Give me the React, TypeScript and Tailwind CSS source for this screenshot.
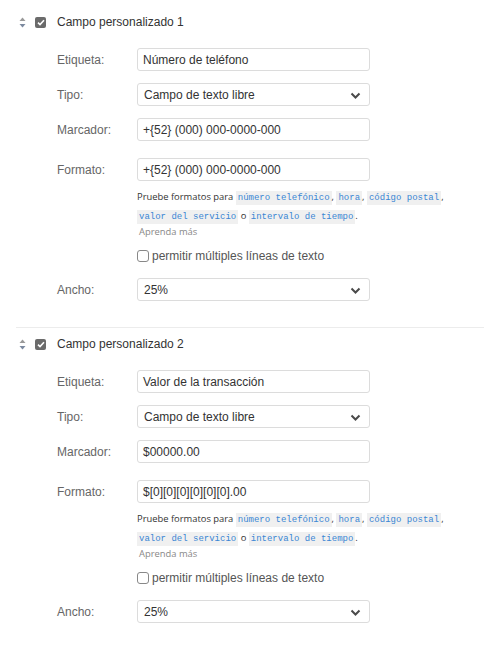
import React from "react";

const Chevron = () => (
  <svg width="11" height="8" viewBox="0 0 11 8" className="absolute right-[8px] top-[8px]">
    <path d="M1.5 1.5 L5.5 5.5 L9.5 1.5" fill="none" stroke="#4a4a4a" strokeWidth="2" />
  </svg>
);

const SortIcon = () => (
  <svg width="7" height="11" viewBox="0 0 7 11">
    <path d="M3.5 0.5 L6.5 4 L0.5 4 Z" fill="#9a9a9a" />
    <path d="M3.5 10.5 L6.5 7 L0.5 7 Z" fill="#7c8aa0" />
  </svg>
);

const HeaderCheck = () => (
  <div className="w-[11px] h-[11px] rounded-[2px] bg-[#6b6b6b] flex items-center justify-center">
    <svg width="8" height="7" viewBox="0 0 8 7">
      <path d="M1 3.6 L3 5.5 L7 1.2" fill="none" stroke="#ffffff" strokeWidth="1.6" />
    </svg>
  </div>
);

const Code = ({ children }: { children: React.ReactNode }) => (
  <span className="bg-[#f0f0f0] text-[#3a86d4] px-[2px] py-[2px] text-[9px]" style={{ fontFamily: '"Liberation Mono", "DejaVu Sans Mono", monospace' }}>
    {children}
  </span>
);

const Row = ({ label, children, mt }: { label: string; children: React.ReactNode; mt: string }) => (
  <div className={`flex items-center ${mt}`}>
    <div className="w-[80px] pl-[57px] box-content shrink-0 text-[12px] text-[#666]">{label}</div>
    <div className="w-[233px]">{children}</div>
  </div>
);

const Input = ({ value }: { value: string }) => (
  <div className="h-[23px] border border-[#dcdcdc] rounded-[3px] px-[5px] flex items-center text-[12px] text-[#333] bg-white">
    {value}
  </div>
);

const Select = ({ value }: { value: string }) => (
  <div className="relative h-[23px] border border-[#dcdcdc] rounded-[3px] pl-[6px] flex items-center text-[12px] text-[#333] bg-white">
    {value}
    <Chevron />
  </div>
);

const helpFont = { fontFamily: '"Open Sans", "Noto Sans", sans-serif' };

const Section = ({ n, label, marker, format }: { n: number; label: string; marker: string; format: string }) => (
  <div>
    <div className="flex items-center h-[14px] pl-[19px]">
      <SortIcon />
      <div className="ml-[9px]"><HeaderCheck /></div>
      <div className="ml-[11px] text-[12px] text-[#333]">Campo personalizado {n}</div>
    </div>
    <Row label="Etiqueta:" mt="mt-[19px]"><Input value={label} /></Row>
    <Row label="Tipo:" mt="mt-[12px]"><Select value="Campo de texto libre" /></Row>
    <Row label="Marcador:" mt="mt-[12px]"><Input value={marker} /></Row>
    <Row label="Formato:" mt="mt-[17px]"><Input value={format} /></Row>
    <div className="ml-[137px] mt-[7px] w-[350px]">
      <div className="h-[19px] flex items-center text-[9.4px] text-[#333] whitespace-nowrap" style={helpFont}>
        <span>Pruebe formatos para <Code>número telefónico</Code>, <Code>hora</Code>, <Code>código postal</Code>,</span>
      </div>
      <div className="h-[19px] flex items-center text-[9.4px] text-[#333] whitespace-nowrap" style={helpFont}>
        <span><Code>valor del servicio</Code> o <Code>intervalo de tiempo</Code>.</span>
      </div>
      <div className="h-[13px] flex items-center text-[9.4px] text-[#888] ml-[2px]" style={helpFont}>
        Aprenda más
      </div>
      <div className="flex items-center h-[16px] mt-[9px]">
        <div className="w-[12px] h-[12px] border border-[#888] rounded-[3px] bg-white" />
        <div className="ml-[3px] text-[12px] text-[#555]">permitir múltiples líneas de texto</div>
      </div>
    </div>
    <Row label="Ancho:" mt="mt-[14px]"><Select value="25%" /></Row>
  </div>
);

export default function App() {
  return (
    <div className="w-[500px] h-[648px] bg-white overflow-hidden pt-[15px]" style={{ fontFamily: '"Liberation Sans", Arial, sans-serif' }}>
      <Section n={1} label="Número de teléfono" marker="+{52} (000) 000-0000-000" format="+{52} (000) 000-0000-000" />
      <div className="mt-[26px] mx-[16px] border-t border-[#ececec]" />
      <div className="mt-[9px]">
        <Section n={2} label="Valor de la transacción" marker="$00000.00" format="$[0][0][0][0][0][0].00" />
      </div>
    </div>
  );
}
